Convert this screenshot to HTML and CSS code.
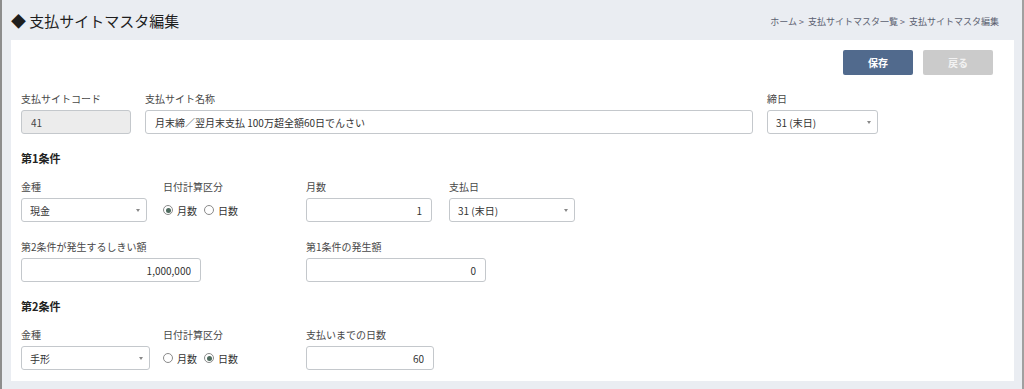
FILE: index.html
```html
<!DOCTYPE html>
<html lang="ja">
<head>
    <meta charset="UTF-8">
    <title>支払サイトマスタ編集</title>
    <link rel="stylesheet" href="styles.css">
</head>
<body>
<div class="page">
    <div class="page-head">
        <h1>◆ 支払サイトマスタ編集</h1>
        <div class="breadcrumb">ホーム &gt;&nbsp; 支払サイトマスタ一覧 &gt;&nbsp; 支払サイトマスタ編集</div>
    </div>

    <div class="card">
        <div class="actions">
            <button type="button" class="btn btn-save">保存</button>
            <button type="button" class="btn btn-back">戻る</button>
        </div>

        <div class="row row-first">
            <div class="field w-124">
                <label>支払サイトコード</label>
                <input type="text" class="input input-readonly" value="41" style="width:110px" readonly>
            </div>
            <div class="field w-622">
                <label>支払サイト名称</label>
                <input type="text" class="input" value="月末締／翌月末支払 100万超全額60日でんさい" style="width:608px">
            </div>
            <div class="field">
                <label>締日</label>
                <div class="select-wrap" style="width:111px">
                    <select class="input select"><option>31 (末日)</option></select>
                </div>
            </div>
        </div>

        <h3 class="section">第1条件</h3>

        <div class="row">
            <div class="field w-142">
                <label>金種</label>
                <div class="select-wrap" style="width:126px">
                    <select class="input select"><option>現金</option></select>
                </div>
            </div>
            <div class="field w-143">
                <label>日付計算区分</label>
                <div class="radios">
                    <span class="radio checked"></span><span class="radio-label">月数</span>
                    <span class="radio"></span><span class="radio-label">日数</span>
                </div>
            </div>
            <div class="field w-143">
                <label>月数</label>
                <input type="text" class="input num" value="1" style="width:126px">
            </div>
            <div class="field">
                <label>支払日</label>
                <div class="select-wrap" style="width:126px">
                    <select class="input select"><option>31 (末日)</option></select>
                </div>
            </div>
        </div>

        <div class="row row-gap">
            <div class="field w-285">
                <label>第2条件が発生するしきい額</label>
                <input type="text" class="input num" value="1,000,000" style="width:180px">
            </div>
            <div class="field">
                <label>第1条件の発生額</label>
                <input type="text" class="input num" value="0" style="width:180px">
            </div>
        </div>

        <h3 class="section">第2条件</h3>

        <div class="row">
            <div class="field w-142">
                <label>金種</label>
                <div class="select-wrap" style="width:129px">
                    <select class="input select"><option>手形</option></select>
                </div>
            </div>
            <div class="field w-143">
                <label>日付計算区分</label>
                <div class="radios">
                    <span class="radio"></span><span class="radio-label">月数</span>
                    <span class="radio checked"></span><span class="radio-label">日数</span>
                </div>
            </div>
            <div class="field">
                <label>支払いまでの日数</label>
                <input type="text" class="input num" value="60" style="width:128px">
            </div>
        </div>
    </div>
</div>
</body>
</html>
```

FILE: styles.css
```css
* {
    box-sizing: border-box;
}

html, body {
    margin: 0;
    height: 100%;
}

body {
    font-family: "Noto Sans CJK JP", "Noto Sans", sans-serif;
    color: #333;
    background-color: #eaedf2;
}

.page {
    height: 389px;
    border-left: 2px solid #8d8d8d;
    border-right: 2px solid #a0a0a0;
    padding: 0 9px 0 9px;
}

.page-head {
    height: 40px;
    display: flex;
    align-items: center;
    justify-content: space-between;
}

h1 {
    margin: 0;
    font-size: 15px;
    font-weight: 400;
    color: #1e1e1e;
}

.breadcrumb {
    font-size: 9px;
    color: #5a6070;
    padding-right: 14px;
    padding-top: 2px;
}

.card {
    background-color: #fff;
    width: 1003px;
    padding: 10px 10px 11px 10px;
}

.actions {
    display: flex;
    justify-content: flex-end;
    gap: 10px;
    padding-right: 11px;
}

.btn {
    width: 70px;
    height: 25px;
    border: none;
    border-radius: 2px;
    font-family: inherit;
    font-size: 10px;
    font-weight: 700;
    color: #fff;
}

.btn-save {
    background-color: #516a8d;
}

.btn-back {
    background-color: #cbcbcb;
    color: #f2f2f2;
}

.row {
    display: flex;
    align-items: flex-start;
}

.row-first {
    margin-top: 17px;
}

.row-gap {
    margin-top: 18px;
}

.field label {
    display: block;
    font-size: 10px;
    line-height: 14px;
    height: 14px;
    color: #484848;
    margin-bottom: 4px;
}

.w-124 { width: 124px; }
.w-622 { width: 622px; }
.w-142 { width: 142px; }
.w-143 { width: 143px; }
.w-285 { width: 285px; }

.input {
    display: block;
    height: 24px;
    border: 1px solid #c4c8cc;
    border-radius: 3px;
    padding: 0 9px;
    font-family: inherit;
    font-size: 10px;
    color: #333;
    background-color: #fff;
    outline: none;
}

.input-readonly {
    background-color: #ececec;
    color: #444;
}

.num {
    text-align: right;
}

.select-wrap {
    position: relative;
}

.select {
    width: 100%;
    appearance: none;
    -webkit-appearance: none;
    padding: 0 8px;
}

.select-wrap::after {
    content: "";
    position: absolute;
    right: 7px;
    top: 11px;
    border-left: 2.5px solid transparent;
    border-right: 2.5px solid transparent;
    border-top: 3px solid #888;
}

.section {
    margin: 16px 0 14px 0;
    font-size: 11px;
    line-height: 16px;
    font-weight: 700;
    color: #222;
}

.radios {
    display: flex;
    align-items: center;
    height: 24px;
    font-size: 10px;
    color: #333;
}

.radio {
    width: 10px;
    height: 10px;
    border: 1px solid #8a8a8a;
    border-radius: 50%;
    margin-right: 4px;
    position: relative;
}

.radio.checked::after {
    content: "";
    position: absolute;
    left: 1.5px;
    top: 1.5px;
    width: 5px;
    height: 5px;
    border-radius: 50%;
    background-color: #4e6b5e;
}

.radio-label {
    margin-right: 7px;
}
```
